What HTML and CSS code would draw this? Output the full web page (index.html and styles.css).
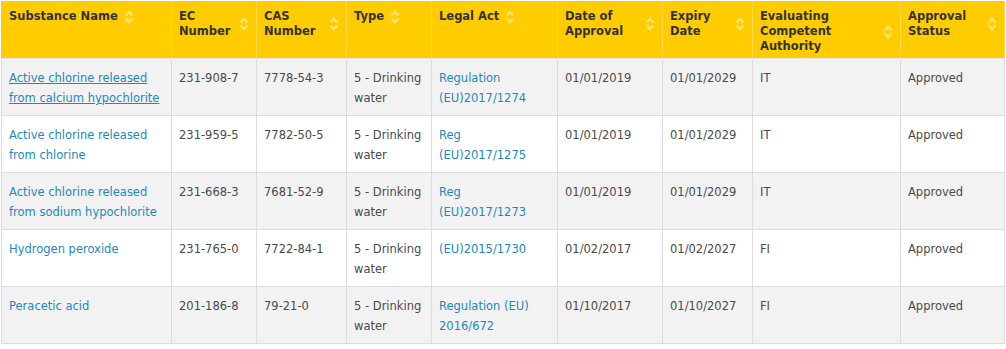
FILE: index.html
```html
<!DOCTYPE html>
<html>
<head>
<meta charset="utf-8">
<link rel="stylesheet" href="styles.css">
</head>
<body>
<table class="grid">
  <colgroup>
    <col class="c1"><col class="c2"><col class="c3"><col class="c4"><col class="c5"><col class="c6"><col class="c7"><col class="c8"><col class="c9">
  </colgroup>
  <thead>
    <tr>
      <th><div class="th"><span>Substance Name</span><i class="sort"></i></div></th>
      <th><div class="th"><span class="grow">EC Number</span><i class="sort"></i></div></th>
      <th><div class="th"><span class="grow">CAS Number</span><i class="sort"></i></div></th>
      <th><div class="th"><span>Type</span><i class="sort"></i></div></th>
      <th><div class="th"><span>Legal Act</span><i class="sort"></i></div></th>
      <th><div class="th"><span class="grow">Date of Approval</span><i class="sort"></i></div></th>
      <th><div class="th"><span class="grow">Expiry Date</span><i class="sort"></i></div></th>
      <th><div class="th"><span class="grow">Evaluating Competent Authority</span><i class="sort"></i></div></th>
      <th><div class="th"><span class="grow">Approval Status</span><i class="sort"></i></div></th>
    </tr>
  </thead>
  <tbody>
    <tr class="odd">
      <td><a class="lnk under" href="#">Active chlorine released from calcium hypochlorite</a></td>
      <td>231-908-7</td><td>7778-54-3</td><td>5 - Drinking water</td>
      <td><a class="lnk" href="#">Regulation (EU)2017/1274</a></td>
      <td>01/01/2019</td><td>01/01/2029</td><td>IT</td><td>Approved</td>
    </tr>
    <tr class="even">
      <td><a class="lnk" href="#">Active chlorine released from chlorine</a></td>
      <td>231-959-5</td><td>7782-50-5</td><td>5 - Drinking water</td>
      <td><a class="lnk" href="#">Reg (EU)2017/1275</a></td>
      <td>01/01/2019</td><td>01/01/2029</td><td>IT</td><td>Approved</td>
    </tr>
    <tr class="odd">
      <td><a class="lnk" href="#">Active chlorine released from sodium hypochlorite</a></td>
      <td>231-668-3</td><td>7681-52-9</td><td>5 - Drinking water</td>
      <td><a class="lnk" href="#">Reg (EU)2017/1273</a></td>
      <td>01/01/2019</td><td>01/01/2029</td><td>IT</td><td>Approved</td>
    </tr>
    <tr class="even">
      <td><a class="lnk" href="#">Hydrogen peroxide</a></td>
      <td>231-765-0</td><td>7722-84-1</td><td>5 - Drinking water</td>
      <td><a class="lnk" href="#">(EU)2015/1730</a></td>
      <td>01/02/2017</td><td>01/02/2027</td><td>FI</td><td>Approved</td>
    </tr>
    <tr class="odd">
      <td><a class="lnk" href="#">Peracetic acid</a></td>
      <td>201-186-8</td><td>79-21-0</td><td>5 - Drinking water</td>
      <td><a class="lnk" href="#">Regulation (EU) 2016/672</a></td>
      <td>01/10/2017</td><td>01/10/2027</td><td>FI</td><td>Approved</td>
    </tr>
  </tbody>
</table>
</body>
</html>
```

FILE: styles.css
```css
html, body {
  margin: 0;
  padding: 0;
  background: #fff;
}
body {
  padding: 1px 2px 0 1px;
  font-family: "DejaVu Sans", Verdana, sans-serif;
  font-size: 11.5px;
  color: #4a4a4a;
}
.grid {
  border-collapse: collapse;
  table-layout: fixed;
  width: 1003px;
}
.c1 { width: 170px; }
.c2 { width: 85px; }
.c3 { width: 90px; }
.c4 { width: 85px; }
.c5 { width: 126px; }
.c6 { width: 105px; }
.c7 { width: 90px; }
.c8 { width: 148px; }
.c9 { width: 104px; }

th {
  background: #ffcc00;
  color: #333;
  font-weight: bold;
  text-align: left;
  vertical-align: top;
  padding: 8px 7px 4px 7px;
  line-height: 15px;
  height: 45px;
  border-left: 1px solid #ffd94d;
  border-right: 1px solid #ffd94d;
  border-bottom: 1px solid #e6e6e6;
}
th:first-child { border-left: 1px solid #ffcc00; }
.th {
  display: flex;
  align-items: center;
  gap: 6px;
}
.th .grow { flex: 1; }
.sort {
  display: inline-block;
  width: 10px;
  height: 14px;
  flex: none;
  background:
    url("data:image/svg+xml;utf8,<svg xmlns='http://www.w3.org/2000/svg' width='10' height='14' viewBox='0 0 10 14'><path d='M1.5 5.5 L5 2 L8.5 5.5 M1.5 8.5 L5 12 L8.5 8.5' fill='none' stroke='%23ffe47a' stroke-width='2.4'/></svg>") no-repeat center;
}
td {
  vertical-align: top;
  padding: 9px 7px 7px 7px;
  line-height: 20px;
  height: 40px;
  border: 1px solid #dcdcdc;
  border-top: none;
}
tr.odd td { background: #f2f2f2; }
tr.even td { background: #fff; }
.lnk {
  color: #1e88c0;
  text-decoration: none;
}
.lnk.under { text-decoration: underline; }
```
